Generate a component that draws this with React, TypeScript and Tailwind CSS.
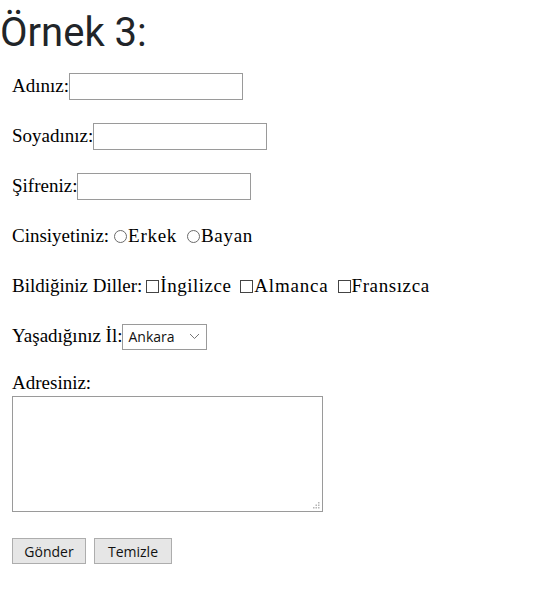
import React, { FC } from "react"

/**
 * small helpers for the fake radio / checkbox boxes (old windows look)
 */
const Radio: FC = () => <span className="inline-block w-[13px] h-[13px] rounded-full border border-[#6b6b6b] bg-white" />
const Check: FC = () => <span className="inline-block w-[13px] h-[13px] border border-[#444] bg-white" />

const App: FC = () => {
  return (
    <div className="w-[544px] h-[594px] bg-white text-black">
      <h1 className="pt-[10px] h-[60px] text-[40px] leading-[46px] text-[#212529] font-['Roboto',sans-serif]">Örnek 3:</h1>

      <form className="flex flex-col pl-[12px] pt-[13px] font-['Liberation_Serif',serif] text-[19px]">
        <div className="flex flex-col gap-[23px]">
          <div className="flex items-center h-[27px]">
            <span>Adınız:</span>
            <input type="text" className="w-[174px] h-[27px] border border-[#9a9a9a] bg-white outline-none" />
          </div>
          <div className="flex items-center h-[27px]">
            <span>Soyadınız:</span>
            <input type="text" className="w-[174px] h-[27px] border border-[#9a9a9a] bg-white outline-none" />
          </div>
          <div className="flex items-center h-[27px]">
            <span>Şifreniz:</span>
            <input type="password" className="w-[174px] h-[27px] border border-[#9a9a9a] bg-white outline-none" />
          </div>
          <div className="flex items-center h-[27px]">
            <span>Cinsiyetiniz:</span>
            <span className="ml-[5px] mr-[1px] flex"><Radio /></span>
            <span className="tracking-[0.7px]">Erkek</span>
            <span className="ml-[10px] mr-[1px] flex"><Radio /></span>
            <span className="tracking-[0.7px]">Bayan</span>
          </div>
          <div className="flex items-center h-[27px]">
            <span>Bildiğiniz Diller:</span>
            <span className="ml-[4px] mr-[1px] flex"><Check /></span>
            <span className="tracking-[0.5px]">İngilizce</span>
            <span className="ml-[9px] mr-[1px] flex"><Check /></span>
            <span className="tracking-[0.8px]">Almanca</span>
            <span className="ml-[9px] mr-[1px] flex"><Check /></span>
            <span className="tracking-[0.6px]">Fransızca</span>
          </div>
          <div className="flex items-center h-[27px]">
            <span>Yaşadığınız İl:</span>
            <div className="flex items-center justify-between w-[85px] h-[26px] border border-[#9a9a9a] bg-white pl-[5px] pr-[6px] font-['Open_Sans',sans-serif] text-[14px] text-[#111]">
              <span>Ankara</span>
              <svg width="11" height="7" viewBox="0 0 11 7" fill="none" stroke="#777" strokeWidth="1">
                <path d="M1 1l4.5 4.5L10 1" />
              </svg>
            </div>
          </div>
        </div>

        <span className="mt-[22px] leading-[22px]">Adresiniz:</span>
        <div className="relative mt-[2px] w-[311px] h-[116px]">
          <textarea className="w-full h-full border border-[#9a9a9a] bg-white outline-none resize-none" />
          {/* dotted resize grip */}
          <svg className="absolute right-[3px] bottom-[3px]" width="7" height="7" viewBox="0 0 7 7" fill="#b5b5b5">
            <rect x="5" y="0" width="1.5" height="1.5" />
            <rect x="2.5" y="2.5" width="1.5" height="1.5" />
            <rect x="5" y="2.5" width="1.5" height="1.5" />
            <rect x="0" y="5" width="1.5" height="1.5" />
            <rect x="2.5" y="5" width="1.5" height="1.5" />
            <rect x="5" y="5" width="1.5" height="1.5" />
          </svg>
        </div>

        <div className="flex gap-[8px] mt-[26px] font-['Open_Sans',sans-serif] text-[14px]">
          <button type="button" className="w-[74px] h-[26px] bg-[#e6e6e6] border border-[#adadad] text-[#111]">Gönder</button>
          <button type="button" className="w-[78px] h-[26px] bg-[#e6e6e6] border border-[#adadad] text-[#111]">Temizle</button>
        </div>
      </form>
    </div>
  )
}

export default App
